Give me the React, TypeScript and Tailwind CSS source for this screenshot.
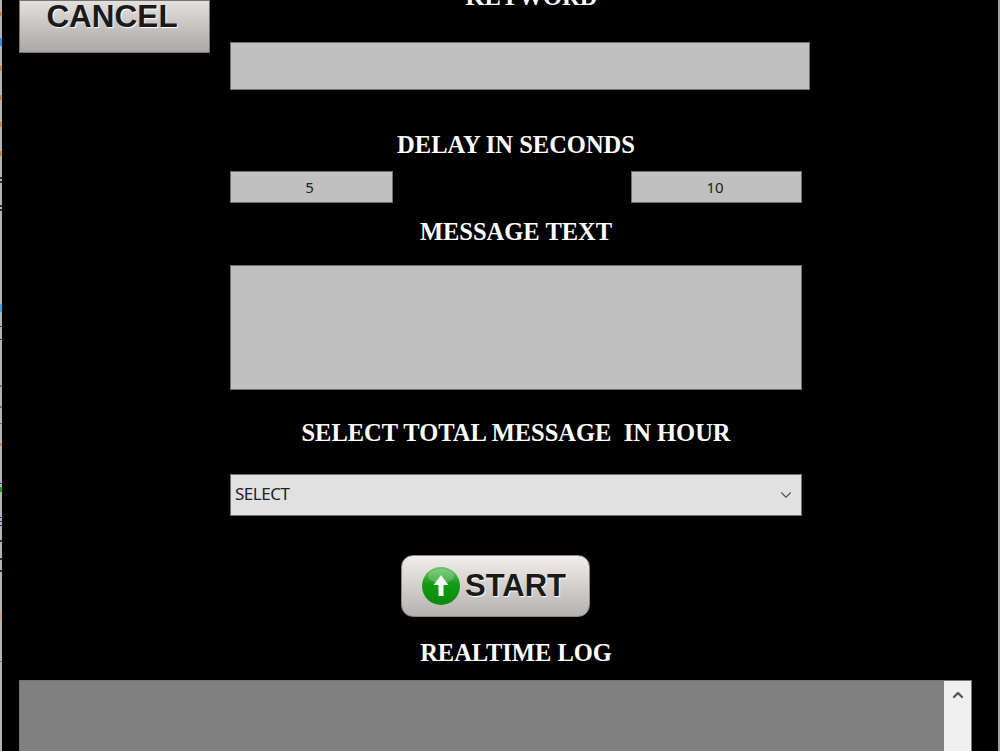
import { ChevronDown, ChevronUp } from 'lucide-react';

const labelClass = "font-['Liberation_Serif',serif] font-bold text-[24.5px] leading-[28px] text-white text-center";
const fieldClass = 'bg-[#c0c0c0] border border-[#6f6f78]';
const smallText = "font-['Noto_Sans',sans-serif] text-[15px] text-[#222]";
const buttonText = "font-['Liberation_Sans',sans-serif] font-bold leading-[36px] text-[#1a1a1a] [text-shadow:1px_1px_1px_#fff]";

// bits of the window behind that show along the left edge
const edgeMarks = [
  'h-[4px] mt-[12px] bg-[#c98a3a]',
  'h-[8px] mt-[22px] bg-[#3a8fd8]',
  'h-[5px] mt-[20px] bg-[#c98a3a]',
  'h-[5px] mt-[24px] bg-[#c98a3a]',
  'h-[5px] mt-[22px] bg-[#c98a3a]',
  'h-[5px] mt-[24px] bg-[#c98a3a]',
  'h-[2px] mt-[21px] bg-[#333333]',
  'h-[2px] mt-[2px] bg-[#333333]',
  'h-[2px] mt-[22px] bg-[#333333]',
  'h-[2px] mt-[2px] bg-[#333333]',
  'h-[8px] mt-[93px] bg-[#4a9fe0]',
  'h-[1px] mt-[14px] bg-[#1f3f8f]',
  'h-[1px] mt-[12px] bg-[#1f3f8f]',
  'h-[2px] mt-[45px] bg-[#8a6a5a]',
  'h-[2px] mt-[19px] bg-[#707070]',
  'h-[1px] mt-[15px] bg-[#707070]',
  'h-[3px] mt-[19px] bg-[#c98a4a]',
  'h-[1px] mt-[37px] bg-[#1f3f8f]',
  'h-[5px] mt-[3px] bg-[#1fa01f]',
  'h-[1px] mt-[25px] bg-[#1f3f8f]',
  'h-[1px] mt-[3px] bg-[#1f3f8f]',
  'h-[1px] mt-[3px] bg-[#1f3f8f]',
  'h-[2px] mt-[14px] bg-[#333333]',
  'h-[2px] mt-[16px] bg-[#333333]',
  'h-[2px] mt-[10px] bg-[#1f2f5f]',
  'h-[6px] mt-[41px] bg-[#c8a090]',
  'h-[1px] mt-[42px] bg-[#707070]',
];

function ArrowBadge() {
  return (
    <svg width="38" height="38" viewBox="0 0 38 38">
      <defs>
        <linearGradient id="badge" x1="0" y1="0" x2="0" y2="1">
          <stop offset="0" stopColor="#6fc46f" />
          <stop offset="0.45" stopColor="#149a14" />
          <stop offset="1" stopColor="#0a8a0a" />
        </linearGradient>
      </defs>
      <circle cx="19" cy="19" r="19" fill="url(#badge)" />
      <ellipse cx="19" cy="9" rx="13" ry="7" fill="#ffffff" opacity="0.2" />
      <path d="M19 8 L26.5 18 H21.5 V29 H16.5 V18 H11.5 Z" fill="#f4fff4" />
    </svg>
  );
}

export default function App() {
  return (
    <div className="h-[751px] w-[1000px] overflow-hidden bg-black flex">
      <div className="w-[2px] h-full bg-[#b4b4b4] shrink-0 flex flex-col">
        {edgeMarks.map((mark, i) => (
          <div key={i} className={mark} />
        ))}
      </div>

      <div className="flex-1 min-w-0 flex flex-col">
        <div className="flex h-[680px] shrink-0">
          <div className="w-[228px] shrink-0 pl-[17px]">
            <div className="h-[53px] w-[191px] border border-[#77736f] bg-gradient-to-b from-[#e4e0dd] to-[#aba7a4] flex items-end justify-center pb-[18px] pr-[5px]">
              <span className={`${buttonText} text-[31.5px]`}>CANCEL</span>
            </div>
          </div>

          <div className="w-[580px] shrink-0 flex flex-col [&>*]:shrink-0">
            <div className={`${labelClass} h-[42px] -mt-[17px] pl-[24px] w-[579px]`}>KEYWORD</div>
            <div className={`${fieldClass} h-[48px] w-[580px] mt-[17px]`} />
            <div className={`${labelClass} mt-[41px] w-[572px]`}>DELAY IN SECONDS</div>
            <div className="flex justify-between w-[572px] mt-[12px]">
              <div className={`${fieldClass} ${smallText} w-[163px] h-[32px] flex items-center justify-center pr-[4px]`}>5</div>
              <div className={`${fieldClass} ${smallText} w-[171px] h-[32px] flex items-center justify-center pr-[3px]`}>10</div>
            </div>
            <div className={`${labelClass} mt-[15px] w-[572px]`}>MESSAGE TEXT</div>
            <div className={`${fieldClass} w-[572px] h-[125px] mt-[19px]`} />
            <div className={`${labelClass} mt-[29px] w-[572px]`}>SELECT TOTAL MESSAGE&nbsp; IN HOUR</div>
            <div className="w-[572px] h-[42px] mt-[27px] bg-[#e1e1e1] border border-[#6f6f78] flex items-center justify-between pl-[4px] pr-[6px]">
              <span className="font-['Noto_Sans',sans-serif] text-[17px] tracking-[-0.5px] text-[#222] pb-[2px]">SELECT</span>
              <ChevronDown size={18} strokeWidth={1.5} className="text-[#555]" />
            </div>
            <div className="w-[189px] h-[62px] ml-[171px] mt-[39px] rounded-[12px] border border-[#8a8784] bg-gradient-to-b from-[#f2eeec] to-[#b5b1ae] flex items-center pl-[20px] gap-[5px]">
              <ArrowBadge />
              <span className={`${buttonText} text-[31px]`}>START</span>
            </div>
            <div className={`${labelClass} mt-[22px] w-[572px]`}>REALTIME LOG</div>
          </div>
        </div>

        <div className="ml-[17px] w-[953px] flex-1 flex border-t border-l border-r border-[#70757a] bg-[#808080]">
          <div className="flex-1" />
          <div className="w-[27px] bg-[#f0f0f0] flex justify-center pt-[6px]">
            <ChevronUp size={16} strokeWidth={3.5} className="text-[#555]" />
          </div>
        </div>
      </div>

      <div className="w-[2px] h-full bg-[#a0a0a0] shrink-0" />
    </div>
  );
}
